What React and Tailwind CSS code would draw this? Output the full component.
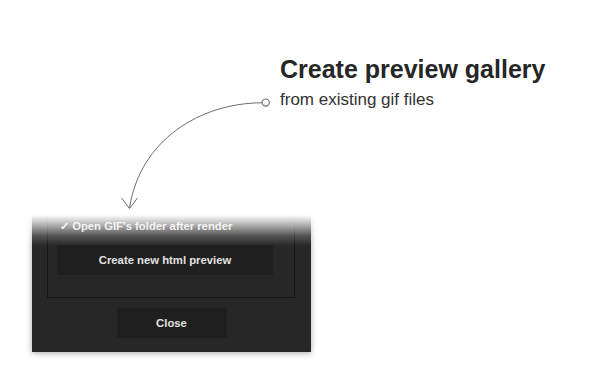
import React from 'react';

function Annotation() {
  return (
    <svg
      className="absolute inset-0 pointer-events-none"
      width="608"
      height="374"
      viewBox="0 0 608 374"
      fill="none"
    >
      <path d="M262 102.8 C200 103 140 140 129.5 208" stroke="#6e6e6e" strokeWidth="1" />
      <polyline points="121.5,198 129.5,208.5 137.5,198" stroke="#6e6e6e" strokeWidth="1" />
      <circle cx="265.7" cy="102.6" r="3.6" stroke="#707070" strokeWidth="1.2" fill="#fff" />
    </svg>
  );
}

export default function App() {
  return (
    <div className="relative w-[608px] h-[374px] bg-white overflow-hidden font-['Liberation_Sans',Arial,sans-serif]">
      {/* Titre */}
      <div className="pl-[280px] pt-[54px]">
        <h1 className="text-[25px] leading-[30px] font-bold text-[#262626]">Create preview gallery</h1>
        <p className="mt-[6px] text-[17px] leading-[20px] text-[#333]">from existing gif files</p>
      </div>

      {/* Panneau sombre */}
      <div className="relative ml-[32px] mt-[102px] w-[279px] h-[140px] bg-[#272727] shadow-[0_1px_6px_rgba(0,0,0,0.35)] text-[#e2e2e2] font-bold text-[11.3px]">
        <div className="ml-[15px] w-[248px] h-[86px] border-x border-b border-[#151515]">
          <div className="pt-[7px] pl-[12px] leading-[14px]">✓ Open GIF's folder after render</div>
          <button className="mt-[12px] ml-[9px] w-[216px] h-[30px] bg-[#1f1f1f] text-[#e2e2e2] text-[11.3px] font-bold">
            Create new html preview
          </button>
        </div>
        <button className="block mx-auto mt-[10px] w-[110px] h-[30px] bg-[#1f1f1f] text-[#e2e2e2] text-[11.3px] font-bold">
          Close
        </button>

        {/* fondu blanc en haut */}
        <div className="absolute -left-[10px] -right-[10px] -top-[10px] h-[44px] bg-[linear-gradient(to_bottom,#fff_13px,rgba(255,255,255,0.6)_24px,rgba(255,255,255,0.2)_34px,rgba(255,255,255,0)_44px)]" />
      </div>

      <Annotation />
    </div>
  );
}
